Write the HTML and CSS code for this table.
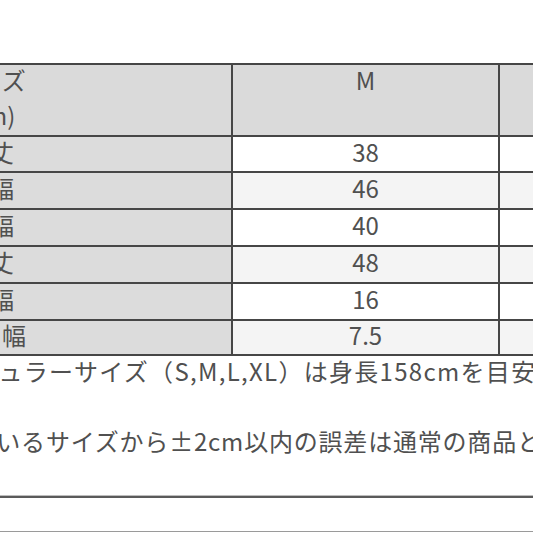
FILE: index.html
```html
<!DOCTYPE html>
<html lang="ja">
<head>
<meta charset="utf-8">
<title>サイズ表</title>
<link rel="stylesheet" href="styles.css">
</head>
<body>
<div class="sheet">
  <div class="size-table">
    <div class="cell head label"><span class="head-text">サイズ<br>(cm)</span></div>
    <div class="cell head"><span class="head-text">M</span></div>
    <div class="cell head"><span class="head-text">L</span></div>

    <div class="cell label">着丈</div>
    <div class="cell">38</div>
    <div class="cell">40</div>

    <div class="cell label">身幅</div>
    <div class="cell alt">46</div>
    <div class="cell alt">48</div>

    <div class="cell label">肩幅</div>
    <div class="cell">40</div>
    <div class="cell">42</div>

    <div class="cell label">袖丈</div>
    <div class="cell alt">48</div>
    <div class="cell alt">50</div>

    <div class="cell label">袖幅</div>
    <div class="cell">16</div>
    <div class="cell">17</div>

    <div class="cell label">袖口幅</div>
    <div class="cell alt">7.5</div>
    <div class="cell alt">8</div>
  </div>

  <div class="notes">
    <p class="note note-wide">※当店レギュラーサイズ（S,M,L,XL）は身長158cmを目安にしています。</p>
    <p class="note">※記載しているサイズから±2cm以内の誤差は通常の商品と同様です。</p>
  </div>
  <div class="footer-row"></div>
</div>
</body>
</html>
```

FILE: styles.css
```css
html, body {
  margin: 0;
  padding: 0;
  background: #ffffff;
  overflow: hidden;
}

body {
  width: 533px;
  height: 533px;
  font-family: "Noto Sans CJK JP", "Noto Sans", sans-serif;
  font-size: 24px;
  color: #505050;
}

.sheet {
  width: 1100px;
  margin-left: -253px;
  padding-top: 63px;
}

.size-table {
  display: grid;
  grid-template-columns: 482px 265px 300px;
  grid-template-rows: 70px 34px 35px 35px 35px 35px 33px;
  gap: 2px;
  padding: 2px;
  background: #464646;
  width: max-content;
}

.cell {
  background: #ffffff;
  display: flex;
  align-items: center;
  justify-content: center;
  text-align: center;
  line-height: 35px;
  padding-bottom: 6px;
  box-sizing: border-box;
}

.cell.alt {
  background: #f4f4f4;
}

.cell.label {
  background: #dcdcdc;
}

.cell.head {
  background: #dadada;
  align-items: flex-start;
  padding-bottom: 0;
}

.head-text {
  display: block;
  margin-top: -3px;
}

.notes {
  padding: 0 0 39px 126px;
  border-bottom: 1px solid #bdbdbd;
  display: flex;
  flex-direction: column;
  gap: 40px;
}

.note {
  margin: 0;
  line-height: 30px;
  letter-spacing: 0.8px;
  white-space: nowrap;
}

.note-wide {
  letter-spacing: 1.3px;
  margin-left: -1px;
}

.footer-row {
  height: 33px;
  border-top: 2px solid #5a5a5a;
  border-bottom: 1px solid #9a9a9a;
}
```
